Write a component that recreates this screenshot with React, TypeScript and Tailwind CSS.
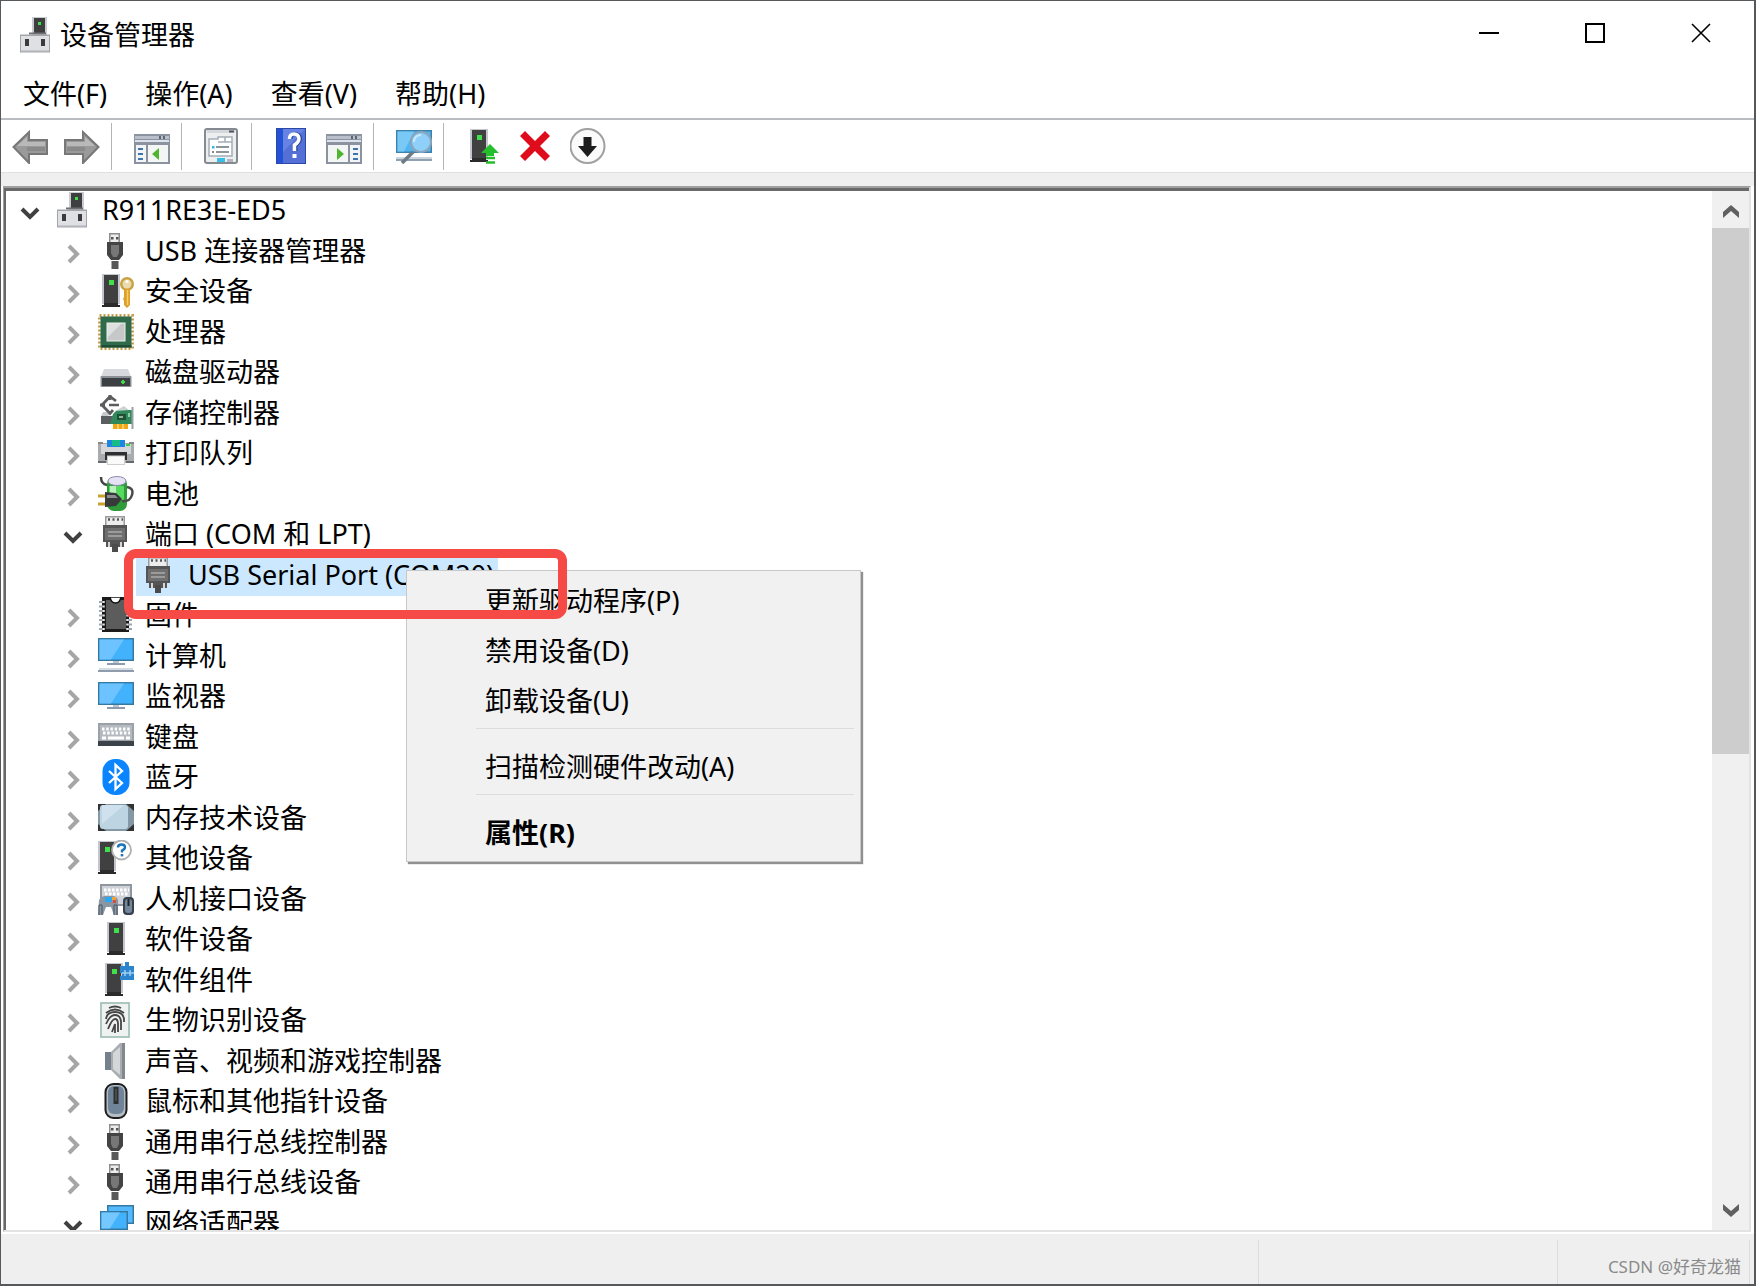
import { Fragment, useState } from "react";
import type { ReactNode } from "react";

type IconName =
  | "root"
  | "usb"
  | "security"
  | "cpu"
  | "disk"
  | "storage"
  | "printer"
  | "battery"
  | "port"
  | "firmware"
  | "computer"
  | "monitor"
  | "keyboard"
  | "bluetooth"
  | "memory"
  | "other"
  | "hid"
  | "software"
  | "component"
  | "biometric"
  | "sound"
  | "mouse"
  | "network";

type Device = {
  name: string;
  icon: IconName;
  level: 0 | 1 | 2;
  state?: "open" | "closed";
};

const devices: Device[] = [
  { name: "R911RE3E-ED5", icon: "root", level: 0, state: "open" },
  { name: "USB 连接器管理器", icon: "usb", level: 1, state: "closed" },
  { name: "安全设备", icon: "security", level: 1, state: "closed" },
  { name: "处理器", icon: "cpu", level: 1, state: "closed" },
  { name: "磁盘驱动器", icon: "disk", level: 1, state: "closed" },
  { name: "存储控制器", icon: "storage", level: 1, state: "closed" },
  { name: "打印队列", icon: "printer", level: 1, state: "closed" },
  { name: "电池", icon: "battery", level: 1, state: "closed" },
  { name: "端口 (COM 和 LPT)", icon: "port", level: 1, state: "open" },
  { name: "USB Serial Port (COM20)", icon: "port", level: 2 },
  { name: "固件", icon: "firmware", level: 1, state: "closed" },
  { name: "计算机", icon: "computer", level: 1, state: "closed" },
  { name: "监视器", icon: "monitor", level: 1, state: "closed" },
  { name: "键盘", icon: "keyboard", level: 1, state: "closed" },
  { name: "蓝牙", icon: "bluetooth", level: 1, state: "closed" },
  { name: "内存技术设备", icon: "memory", level: 1, state: "closed" },
  { name: "其他设备", icon: "other", level: 1, state: "closed" },
  { name: "人机接口设备", icon: "hid", level: 1, state: "closed" },
  { name: "软件设备", icon: "software", level: 1, state: "closed" },
  { name: "软件组件", icon: "component", level: 1, state: "closed" },
  { name: "生物识别设备", icon: "biometric", level: 1, state: "closed" },
  { name: "声音、视频和游戏控制器", icon: "sound", level: 1, state: "closed" },
  { name: "鼠标和其他指针设备", icon: "mouse", level: 1, state: "closed" },
  { name: "通用串行总线控制器", icon: "usb", level: 1, state: "closed" },
  { name: "通用串行总线设备", icon: "usb", level: 1, state: "closed" },
  { name: "网络适配器", icon: "network", level: 1, state: "open" },
];

const indent = { 0: "pl-1", 1: "pl-[47px]", 2: "pl-[90px]" };

function Svg({ children }: { children: ReactNode }) {
  return (
    <svg viewBox="0 0 36 36" className="size-9 shrink-0" aria-hidden="true">
      {children}
    </svg>
  );
}

// black tower with a green light, shared by several device classes
function Tower({ x = 9 }: { x?: number }) {
  return (
    <g transform={`translate(${x} 0)`}>
      <rect x="0" y="1" width="18" height="30" fill="#c3c7cd" />
      <rect x="2" y="2" width="14" height="28" fill="#404040" />
      <rect x="7" y="7" width="5" height="5" fill="#3fe04a" />
      <rect x="2" y="30" width="14" height="2" fill="#2c2c2c" />
      <rect x="0" y="32" width="18" height="2" fill="#2a2a2a" />
    </g>
  );
}

function Screen({ y = 0 }: { y?: number }) {
  return (
    <g transform={`translate(0 ${y})`}>
      <rect x="0" y="0" width="36" height="23" fill="#3579a3" />
      <rect x="1.5" y="1.5" width="33" height="20" fill="#42b2fd" />
      <path d="M1.5 1.5H26L13 21.5H1.5Z" fill="#6cc3ff" />
      <rect x="15" y="23" width="6" height="2" fill="#b9c6d2" />
      <rect x="9" y="25" width="18" height="2" fill="#8b9bab" />
    </g>
  );
}

const icons: Record<IconName, ReactNode> = {
  root: (
    <>
      <rect x="14" y="0" width="15" height="18" fill="#c9ccd1" />
      <rect x="16" y="1" width="11" height="16" fill="#3f3f3f" />
      <rect x="20" y="5" width="3" height="3" fill="#3fe04a" />
      <rect x="11" y="15.5" width="17" height="2" fill="#6d6f73" />
      <rect x="2" y="17.5" width="30" height="18" fill="#a3a5aa" />
      <rect x="3" y="19" width="28" height="14" fill="#dfe0e4" />
      <rect x="3" y="33" width="28" height="1.5" fill="#c6c8cd" />
      <rect x="7" y="22" width="4" height="7" fill="#3b3b3b" />
      <rect x="23" y="22" width="4" height="7" fill="#3b3b3b" />
    </>
  ),
  usb: (
    <>
      <rect x="11" y="0" width="11" height="10" fill="#8d8d8d" />
      <rect x="12.5" y="1.5" width="8" height="8" fill="#ececec" />
      <rect x="13" y="4" width="2.5" height="2.5" fill="#555" />
      <rect x="18" y="4" width="2.5" height="2.5" fill="#555" />
      <path d="M9 9H25V22L21 27H13L9 22Z" fill="#444" />
      <path d="M13 12H21V20L19 24H15L13 20Z" fill="#777" />
      <rect x="13.500" y="28" width="7" height="8" fill="#585858" />
    </>
  ),
  security: (
    <>
      <Tower x={4} />
      <circle cx="29" cy="11" r="7" fill="#c9a146" />
      <circle cx="29" cy="11" r="4.5" fill="#eadcae" />
      <circle cx="29" cy="8.5" r="1.6" fill="#fff" />
      <path d="M26 16H32V32L29 35L26 32V28L25 26L26 24Z" fill="#dea02a" />
      <path d="M29.5 17V32" stroke="#f7cf68" strokeWidth="1.5" />
    </>
  ),
  cpu: (
    <>
      <rect x="1.5" y="1.5" width="33" height="33" fill="none" stroke="#c69c4d" strokeWidth="3" strokeDasharray="2 2" />
      <rect x="2.5" y="2.5" width="31" height="31" fill="#2f6a4b" />
      <rect x="3.5" y="31" width="30" height="2.5" fill="#1f4c36" />
      <rect x="9" y="9" width="18" height="18" fill="#c5c7c8" />
      <path d="M9 9H24L9 24Z" fill="#dedfdf" />
      <rect x="9" y="9" width="18" height="18" fill="none" stroke="#eef1ef" />
    </>
  ),
  disk: (
    <>
      <path d="M6 15H30L33 23H3Z" fill="#d6d8db" />
      <rect x="2.5" y="22" width="31" height="11" rx="1" fill="#8b9096" />
      <rect x="4" y="24" width="28" height="8" fill="#3d4043" />
      <path d="M25 26V30M23 28H27" stroke="#3fd94a" strokeWidth="2" />
    </>
  ),
  storage: (
    <>
      <path d="M3 21H16V29H3Z" fill="#5b5e61" />
      <path d="M3 21H10L14 17H5Z" fill="#c7cacd" />
      <path d="M18 6L12 1.500L4 10L12 18.500L15 15" fill="none" stroke="#5c5c5c" strokeWidth="2.800" />
      <path d="M2 10H7M12 0V5" stroke="#5c5c5c" strokeWidth="3" />
      <path d="M11 10H21" stroke="#5c5c5c" strokeWidth="2.500" />
      <path d="M15 19L19 15H34V29H12Z" fill="#31895b" />
      <path d="M17 16L26 11L31 15Z" fill="#cbd5d1" />
      <rect x="19" y="19" width="9" height="6" fill="#1e5035" />
      <rect x="21" y="21" width="4" height="2" fill="#8fb69d" />
      <rect x="30" y="18" width="2" height="4" fill="#8fd0a8" />
      <rect x="15" y="29" width="15" height="5" fill="#efa714" />
      <path d="M20 29V34M25 29V34" stroke="#fff0b8" />
      <path d="M34.5 12V34" stroke="#9ba0a5" strokeWidth="2" />
    </>
  ),
  printer: (
    <>
      <rect x="0" y="8" width="36" height="20" fill="#a9abae" />
      <rect x="0" y="7" width="5" height="2" fill="#888" />
      <rect x="31" y="7" width="5" height="2" fill="#888" />
      <path d="M3 9H33V19H3Z" fill="#d4d6d9" />
      <rect x="9" y="5" width="18" height="7" fill="#1d86e0" />
      <rect x="14" y="5" width="8" height="6" fill="#15bc86" />
      <rect x="28" y="9" width="4" height="2" fill="#39d24a" />
      <rect x="7" y="17" width="22" height="8" fill="#2d2f31" />
      <rect x="9.500" y="21" width="17" height="8.500" fill="#fafafa" stroke="#cfcfcf" />
      <rect x="0" y="26" width="8" height="2" fill="#66696c" />
      <rect x="28" y="26" width="8" height="2" fill="#66696c" />
    </>
  ),
  battery: (
    <>
      <rect x="9" y="1" width="20" height="34" rx="7" fill="#2f9b38" />
      <ellipse cx="19" cy="5" rx="9" ry="4.5" fill="#e4e2f4" stroke="#8e8ca8" />
      <rect x="11" y="10" width="15" height="14" fill="#55d95f" />
      <path d="M12 10H18V20H12Z" fill="#b9f3bb" />
      <path d="M3 1Q3 8 9 9" fill="none" stroke="#454545" strokeWidth="2.5" />
      <path d="M29 11Q36 12 34 19T24 25" fill="none" stroke="#4b4b4b" strokeWidth="2.5" />
      <path d="M0 20H8M0 28H8" stroke="#c9a22c" strokeWidth="3" />
      <path d="M7 16L18 17L24 23L18 30L7 31Z" fill="#37393b" />
      <path d="M9 19H17L20 22H9Z" fill="#8a8d90" />
    </>
  ),
  port: (
    <>
      <rect x="7" y="0" width="20" height="10" fill="#9b9b9b" />
      <rect x="8.5" y="1.5" width="17" height="8" fill="#ececec" />
      <path d="M10 3.5H25" stroke="#555" strokeWidth="2.5" strokeDasharray="2 2.5" />
      <path d="M5 9H29V26H26V31H8V26H5Z" fill="#555" />
      <path d="M7 12H27V24H7Z" fill="#6f6f6f" />
      <path d="M10 16H24M10 20H24" stroke="#aaa" strokeWidth="1.5" />
      <path d="M11 26V31M23 26V31" stroke="#fff" strokeWidth="1.5" />
      <rect x="14" y="28" width="6" height="8" fill="#4b4b4b" />
    </>
  ),
  firmware: (
    <>
      <path d="M3 4V33M32 4V33" stroke="#9aa4ae" strokeWidth="4" strokeDasharray="2 2.500" />
      <rect x="4" y="0" width="27" height="35" fill="#1b1b1b" />
      <rect x="8" y="3" width="20" height="29" fill="#5c5c5c" />
      <path d="M5.500 4V33M29.500 4V33" stroke="#e3e6e8" strokeWidth="2.500" strokeDasharray="2 2.500" />
      <path d="M12 0Q13 6 17.500 6T23 0Z" fill="#fff" stroke="#111" strokeWidth="1.5" />
    </>
  ),
  computer: (
    <>
      <Screen />
      <rect x="1" y="30" width="34" height="2" fill="#d5dbe2" />
      <rect x="0" y="32" width="36" height="2" fill="#8e9cab" />
    </>
  ),
  monitor: <Screen y={4} />,
  keyboard: (
    <>
      <rect x="0" y="4" width="36" height="23" fill="#9ba1a8" />
      <rect x="2" y="6" width="32" height="15" fill="#b4babf" />
      <path d="M4 10H33" stroke="#fff" strokeWidth="3" strokeDasharray="2.5 1.7" />
      <path d="M5 14H32" stroke="#fff" strokeWidth="3" strokeDasharray="2.5 1.7" />
      <path d="M4 19H8M10 19H26M28 19H32" stroke="#fff" strokeWidth="3" />
      <rect x="0" y="22" width="36" height="5" fill="#3b4248" />
    </>
  ),
  bluetooth: (
    <>
      <rect x="4.5" y="0" width="27" height="36" rx="12.5" fill="#0a84ff" />
      <path d="M11 12L24 24L17.5 30V6L24 12L11 24" fill="none" stroke="#fff" strokeWidth="2.3" />
    </>
  ),
  memory: (
    <>
      <rect x="0" y="4" width="36" height="27" rx="2" fill="#8498a6" />
      <path d="M0 4H8L0 11ZM36 4H28L36 11ZM0 31V24L8 31ZM36 31V24L28 31Z" fill="#333" />
      <rect x="2" y="5" width="28" height="24" rx="3" fill="#bdd4e3" />
      <path d="M4 5H26L4 24Z" fill="#cfe1ed" />
    </>
  ),
  other: (
    <>
      <Tower x={0} />
      <circle cx="23.5" cy="10" r="9.500" fill="#fff" stroke="#b0b0b0" strokeWidth="1.8" />
      <path d="M20 7.5Q20 4.5 23.5 4.5T27 7.5Q27 9 24 10.5V12.5" fill="none" stroke="#1c75bc" strokeWidth="2.4" />
      <rect x="22.7" y="14" width="2.6" height="2.4" fill="#1c75bc" />
    </>
  ),
  hid: (
    <>
      <rect x="2" y="3" width="32" height="22" fill="#8e969e" />
      <rect x="4" y="5" width="28" height="18" fill="#cfd3d8" />
      <path d="M6 9H31M7 13H30" stroke="#fff" strokeWidth="3" strokeDasharray="2.5 1.5" />
      <path d="M1 19Q4 14 11 15Q18 14 20 19V34H16L13 26H8L5 34H0Z" fill="#8a96a2" />
      <path d="M1 34V24H4V34M16 34V24H19V34" stroke="#48545f" fill="none" />
      <rect x="7" y="16" width="7" height="5" fill="#2ca8f2" />
      <rect x="14" y="16" width="4" height="3" fill="#f0a13b" />
      <rect x="15" y="19" width="3" height="3" fill="#dd4a3a" />
      <rect x="25" y="16" width="11" height="18" rx="4" fill="#35414d" />
      <rect x="27" y="18" width="7" height="14" rx="3" fill="#74879a" />
      <path d="M30.5 18V25" stroke="#222" strokeWidth="2" />
    </>
  ),
  software: <Tower />,
  component: (
    <>
      <Tower x={7} />
      <path d="M22 4H27V0H31V4H36V18H22V14H24V11H22Z" fill="#2b84cc" />
      <path d="M27 8V14M32 8V14M24 11H36" stroke="#9fd0f2" strokeWidth="1.500" />
    </>
  ),
  biometric: (
    <>
      <rect x="3" y="1" width="28" height="34" fill="#eef3f2" stroke="#a3c2b8" strokeWidth="1.8" />
      <g fill="none" stroke="#464646" strokeWidth="1.8">
        <path d="M11 6Q17 3 23 6" />
        <path d="M8 11Q17 4 26 11" />
        <path d="M8 17Q9 10 17 10T26 17V20" />
        <path d="M8 22Q12 13 17 13T23 19V28" />
        <path d="M10 27Q14 17 17 17T20 22V30" />
        <path d="M14 30L17 22V31" />
      </g>
    </>
  ),
  sound: (
    <>
      <path d="M7 9H13L22 0H27V36H22L13 27H7Z" fill="#a9adb1" />
      <path d="M7 9H13V27H7Z" fill="#74818c" />
      <path d="M15 10L22 4V32L15 26Z" fill="#d4d7da" />
      <path d="M24 0H27V36H24Z" fill="#82888e" />
    </>
  ),
  mouse: (
    <>
      <rect x="7.5" y="1" width="21" height="34" rx="8" fill="#b5bcc4" stroke="#1d1d1d" strokeWidth="2" />
      <rect x="10" y="3" width="16" height="28" rx="6" fill="#6f8498" />
      <rect x="15.5" y="4" width="5" height="17" fill="#2d2f31" />
      <path d="M18 6V18" stroke="#666" />
    </>
  ),
  network: (
    <>
      <rect x="9" y="0" width="27" height="19" fill="#3579a3" />
      <rect x="10.5" y="1.5" width="24" height="16" fill="#55bafd" />
      <rect x="2" y="6" width="28" height="19" fill="#3579a3" />
      <rect x="3.5" y="7.5" width="25" height="16" fill="#42b2fd" />
      <path d="M3.5 7.5H22L12 23.5H3.5Z" fill="#74c7ff" />
      <rect x="9" y="28" width="14" height="2" fill="#8b9bab" />
    </>
  ),
};

function Console({ flip = false }: { flip?: boolean }) {
  return (
    <Svg>
      <g transform={flip ? "translate(36 0) scale(-1 1)" : undefined}>
        <rect x="0" y="6" width="36" height="30" fill="#8b939e" />
        <rect x="1" y="8" width="34" height="3" fill="#b9c0ca" />
        <rect x="1" y="12" width="34" height="2" fill="#dce3ef" />
        <rect x="2" y="17" width="10" height="17" fill="#f2f4f7" />
        <rect x="14" y="17" width="20" height="17" fill="#f4f5f5" />
        <path d="M4 21H9M4 26H9M4 31H9" stroke="#3c74ad" strokeWidth="2" />
        <path d="M25 20V32L18 26Z" fill="#4db530" />
      </g>
      <path d="M26 8V11M30 8V11" stroke="#5e6773" strokeWidth="2" />
    </Svg>
  );
}

function Arrow({ flip = false }: { flip?: boolean }) {
  return (
    <Svg>
      <g transform={flip ? "translate(36 0) scale(-1 1)" : undefined}>
        <path d="M1.5 19L17 4V12H35V26H17V35Z" fill="#9a9a9a" stroke="#777" strokeWidth="2" />
        <path d="M5 18L15 9V14H33V18Z" fill="#b9b9b9" />
        <path d="M15 19H33V23H15Z" fill="#8a8a8a" />
      </g>
    </Svg>
  );
}

const toolbar: { label: string; icon: ReactNode }[][] = [
  [
    { label: "后退", icon: <Arrow /> },
    { label: "前进", icon: <Arrow flip /> },
  ],
  [{ label: "显示/隐藏控制台树", icon: <Console /> }],
  [
    {
      label: "属性",
      icon: (
        <Svg>
          <rect x="1" y="1" width="32" height="34" rx="2" fill="#eceef0" stroke="#858a90" strokeWidth="2" />
          <rect x="3" y="2" width="28" height="3" fill="#d5d8dc" />
          <path d="M25 3.5H30" stroke="#4d535a" strokeWidth="2" />
          <path d="M5 11H14V9H28V28H5Z" fill="#fff" stroke="#a5adb7" strokeWidth="1.5" />
          <path d="M14 14H28M21 9V14" stroke="#a5adb7" strokeWidth="1.5" />
          <path d="M12 19H25M12 24H25" stroke="#8d949c" strokeWidth="1.8" />
          <rect x="8" y="18" width="2.5" height="2.5" fill="#2fb7e8" />
          <rect x="8" y="23" width="2" height="2" fill="#888" />
          <rect x="13" y="30" width="8" height="4" fill="#38bfe8" />
          <rect x="23" y="31" width="6" height="3" fill="#b3b8be" />
        </Svg>
      ),
    },
  ],
  [
    {
      label: "帮助",
      icon: (
        <Svg>
          <rect x="2" y="0" width="30" height="36" fill="#2c47a8" />
          <rect x="3" y="1" width="6" height="34" fill="#2452d4" />
          <rect x="9" y="1" width="22" height="34" fill="#5470d6" />
          <path d="M9 1H31L9 24Z" fill="#6683e4" />
          <path d="M16.5 11Q16.5 6 21 6T26 10.5Q26 14 21.5 17V23" fill="none" stroke="#293f94" strokeWidth="4" />
          <path d="M15.5 11Q15.5 6 20 6T25 10.5Q25 14 20.5 17V23" fill="none" stroke="#fff" strokeWidth="3.5" />
          <rect x="18.5" y="26" width="4" height="4" fill="#fff" />
        </Svg>
      ),
    },
    { label: "显示/隐藏操作窗格", icon: <Console flip /> },
  ],
  [
    {
      label: "扫描检测硬件改动",
      icon: (
        <Svg>
          <rect x="0" y="2" width="36" height="23" fill="#3c80ac" />
          <rect x="1.5" y="3.5" width="33" height="20" fill="#53b5ee" />
          <path d="M1.5 3.5H18L8 23.5H1.5Z" fill="#79c8f5" />
          <rect x="0" y="29" width="36" height="2" fill="#cdd6de" />
          <rect x="0" y="31" width="36" height="2" fill="#8fa0b0" />
          <path d="M17 24L6 35" stroke="#6f7a84" strokeWidth="3.5" />
          <circle cx="25" cy="14" r="10" fill="#8fd0fa" stroke="#8ba6ba" strokeWidth="2" />
          <path d="M18 14Q18 7 25 7" fill="none" stroke="#c7e9ff" strokeWidth="2" />
        </Svg>
      ),
    },
  ],
  [
    {
      label: "更新驱动程序",
      icon: (
        <Svg>
          <Tower x={4} />
          <path d="M24 16L33 25H28V28H20V25H15Z" fill="#25bf2e" />
          <path d="M20 30H29M20 34.5H29" stroke="#25bf2e" strokeWidth="2.5" />
        </Svg>
      ),
    },
    {
      label: "卸载设备",
      icon: (
        <Svg>
          <path d="M2 8L7 3L17 13L27 3L32 8L22 18L32 28L27 33L17 23L7 33L2 28L12 18Z" fill="#df0c1c" />
        </Svg>
      ),
    },
    {
      label: "禁用设备",
      icon: (
        <Svg>
          <circle cx="17.500" cy="18" r="17" fill="#fbfbfb" stroke="#a0a0a0" strokeWidth="2" />
          <path d="M13.5 9H21.5V18H27L17.5 29L8 18H13.5Z" fill="#1d1d1d" />
        </Svg>
      ),
    },
  ],
];

const contextMenu = [
  ["更新驱动程序(P)", "禁用设备(D)", "卸载设备(U)"],
  ["扫描检测硬件改动(A)"],
  ["属性(R)"],
];

function Chevron({ state }: { state: "open" | "closed" }) {
  return (
    <svg viewBox="0 0 20 20" className="size-5" aria-hidden="true">
      {state === "open" ? (
        <path d="M2 6L10 14L18 6" fill="none" stroke="#404040" strokeWidth="4" />
      ) : (
        <path d="M6 2L14 10L6 18" fill="none" stroke="#a6a6a6" strokeWidth="4" />
      )}
    </svg>
  );
}

function WindowButton({ label, children }: { label: string; children: ReactNode }) {
  return (
    <button type="button" aria-label={label} className="flex h-16 w-[106px] items-center justify-center hover:bg-gray-200">
      <svg viewBox="0 0 20 20" className="size-5" fill="none" stroke="#000" strokeWidth="2" aria-hidden="true">
        {children}
      </svg>
    </button>
  );
}

function ScrollButton({ label, path }: { label: string; path: string }) {
  return (
    <button type="button" aria-label={label} className="flex h-[37px] items-center justify-center">
      <svg viewBox="0 0 16 20" className="h-5 w-4" aria-hidden="true">
        <path d={path} fill="#606060" />
      </svg>
    </button>
  );
}

export default function App() {
  const [selected, setSelected] = useState("USB Serial Port (COM20)");

  return (
    <div className="h-screen bg-[#55595c] pt-px pr-0.5 pb-0.5 pl-px font-['Noto_Sans','Noto_Sans_CJK_SC',sans-serif] text-[27px] leading-9 text-black">
      <div className="flex h-full flex-col overflow-hidden bg-white">
        <header className="flex h-[68px] shrink-0 items-center pl-[17px]">
          <Svg>{icons.root}</Svg>
          <h1 className="flex-1 pl-1.5">设备管理器</h1>
          <div className="flex self-start">
            <WindowButton label="最小化">
              <path d="M0 10H20" />
            </WindowButton>
            <WindowButton label="最大化">
              <path d="M1 1H19V19H1Z" />
            </WindowButton>
            <WindowButton label="关闭">
              <path d="M1 1L19 19M19 1L1 19" strokeWidth="1.6" />
            </WindowButton>
          </div>
        </header>

        <nav className="flex h-[51px] shrink-0 items-center gap-[38px] border-b-2 border-[#b9bcc0] pl-[22px]">
          <button type="button">文件(F)</button>
          <button type="button">操作(A)</button>
          <button type="button">查看(V)</button>
          <button type="button">帮助(H)</button>
        </nav>

        <div className="flex h-[52px] shrink-0 items-center pl-[11px]">
          {toolbar.map((group, i) => (
            <Fragment key={i}>
              {i > 0 && <span className="ml-[11px] h-[47px] w-[23px] border-l border-[#b4b4b4]" />}
              <div className="flex items-center gap-4">
                {group.map((item) => (
                  <button key={item.label} type="button" aria-label={item.label} title={item.label}>
                    {item.icon}
                  </button>
                ))}
              </div>
            </Fragment>
          ))}
        </div>
        <div className="h-3.5 shrink-0 border-t border-[#e0e0e0] bg-[#efefef]" />

        <main className="mr-[3px] mb-0.5 ml-0.5 flex min-h-0 flex-1 border-t-2 border-r-2 border-b-2 border-l border-t-[#a0a0a0] border-r-[#e3e3e3] border-b-[#e3e3e3] border-l-[#a0a0a0]">
          <div className="relative min-w-0 flex-1 overflow-hidden border-t-[3px] border-l-2 border-[#696969]">
            <ul role="tree" aria-label="设备">
              {devices.map((device) => (
                <li
                  key={device.name}
                  role="treeitem"
                  aria-level={device.level + 1}
                  aria-selected={device.name === selected}
                  aria-expanded={device.state && device.state === "open"}
                  className={`flex odd:h-10 even:h-[41px] ${indent[device.level]}`}
                >
                  <span className="flex w-10 items-center justify-center pt-1">
                    {device.state && <Chevron state={device.state} />}
                  </span>
                  <button
                    type="button"
                    onClick={() => setSelected(device.name)}
                    className={`flex items-center gap-[11px] pr-1 pb-0.5 pl-[5px] whitespace-nowrap ${device.name === selected ? "bg-[#cce8ff]" : ""}`}
                  >
                    <Svg>{icons[device.icon]}</Svg>
                    {device.name}
                  </button>
                </li>
              ))}
            </ul>

            <div
              role="menu"
              className="absolute top-[379px] left-[400px] w-[455px] border border-[#c8c8c8] bg-[#f1f1f1] pt-[5px] pb-[3px] shadow-[2px_2px_1px_#909090]"
            >
              {contextMenu.map((group, i) => (
                <div key={i}>
                  {i > 0 && <hr className="mt-0.5 mr-1.5 mb-[13px] ml-[69px] border-[#dcdcdc]" />}
                  {group.map((label) => (
                    <button
                      key={label}
                      type="button"
                      role="menuitem"
                      className={`block h-[50px] w-full pl-[78px] text-left hover:bg-[#e2e2e2] ${label === "属性(R)" ? "font-bold" : ""}`}
                    >
                      {label}
                    </button>
                  ))}
                </div>
              ))}
            </div>

            <div className="pointer-events-none absolute top-[358px] left-[118px] h-[70px] w-[443px] rounded-xl border-[9px] border-[#f54a45]" />
          </div>

          <div className="flex w-[37px] shrink-0 flex-col border-t-[3px] border-t-[#696969] bg-[#f0f0f0]">
            <ScrollButton label="向上滚动" path="M8 5L16 12V18L8 11L0 18V12Z" />
            <div className="flex-1">
              <div className="h-6/11 bg-[#cdcdcd]" />
            </div>
            <ScrollButton label="向下滚动" path="M8 15L16 8V2L8 9L0 2V8Z" />
          </div>
        </main>

        <footer className="flex h-[50px] shrink-0 bg-[#efefef] pt-1.5 pr-1">
          <div className="flex-1" />
          <div className="w-[299px] border-l border-[#dcdcdc]" />
          <div className="flex w-[193px] items-center justify-end border-x border-[#dcdcdc] pt-2.5 pr-2 text-[17px] leading-6 text-[#8a8a8a]">
            CSDN @好奇龙猫
          </div>
        </footer>
      </div>
    </div>
  );
}
